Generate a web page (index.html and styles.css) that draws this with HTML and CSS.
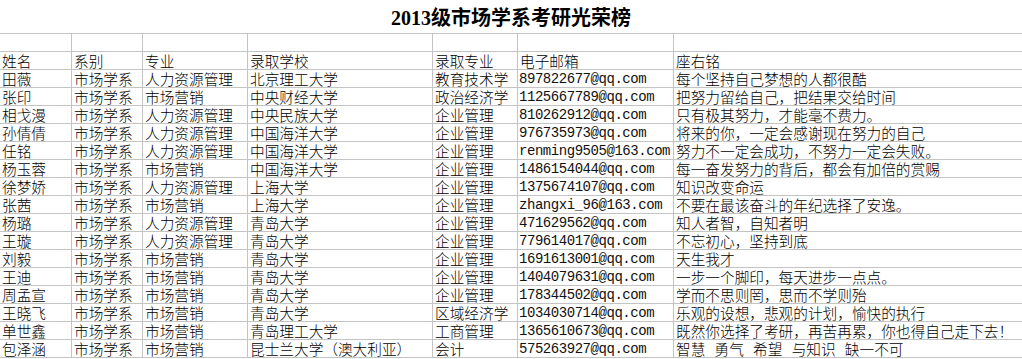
FILE: index.html
```html
<!DOCTYPE html>
<html lang="zh-CN">
<head>
  <meta charset="UTF-8">
  <title>2013级市场学系考研光荣榜</title>
  <link rel="stylesheet" href="styles.css">
</head>
<body>

  <h1 class="title">2013级市场学系考研光荣榜</h1>

  <div class="sheet">
    <!-- empty spacer row -->
    <div class="row"><div></div><div></div><div></div><div></div><div></div><div></div><div></div></div>

    <!-- header -->
    <div class="row"><div>姓名</div><div>系别</div><div>专业</div><div>录取学校</div><div>录取专业</div><div>电子邮箱</div><div>座右铭</div></div>

    <div class="row"><div>田薇</div><div>市场学系</div><div>人力资源管理</div><div>北京理工大学</div><div>教育技术学</div><div class="mail">897822677@qq.com</div><div>每个坚持自己梦想的人都很酷</div></div>
    <div class="row"><div>张印</div><div>市场学系</div><div>市场营销</div><div>中央财经大学</div><div>政治经济学</div><div class="mail">1125667789@qq.com</div><div>把努力留给自己，把结果交给时间</div></div>
    <div class="row"><div>相戈漫</div><div>市场学系</div><div>人力资源管理</div><div>中央民族大学</div><div>企业管理</div><div class="mail">810262912@qq.com</div><div>只有极其努力，才能毫不费力。</div></div>
    <div class="row"><div>孙倩倩</div><div>市场学系</div><div>人力资源管理</div><div>中国海洋大学</div><div>企业管理</div><div class="mail">976735973@qq.com</div><div>将来的你，一定会感谢现在努力的自己</div></div>
    <div class="row"><div>任铭</div><div>市场学系</div><div>人力资源管理</div><div>中国海洋大学</div><div>企业管理</div><div class="mail">renming9505@163.com</div><div>努力不一定会成功，不努力一定会失败。</div></div>
    <div class="row"><div>杨玉蓉</div><div>市场学系</div><div>市场营销</div><div>中国海洋大学</div><div>企业管理</div><div class="mail">1486154044@qq.com</div><div>每一奋发努力的背后，都会有加倍的赏赐</div></div>
    <div class="row"><div>徐梦娇</div><div>市场学系</div><div>人力资源管理</div><div>上海大学</div><div>企业管理</div><div class="mail">1375674107@qq.com</div><div>知识改变命运</div></div>
    <div class="row"><div>张茜</div><div>市场学系</div><div>市场营销</div><div>上海大学</div><div>企业管理</div><div class="mail">zhangxi_96@163.com</div><div>不要在最该奋斗的年纪选择了安逸。</div></div>
    <div class="row"><div>杨璐</div><div>市场学系</div><div>人力资源管理</div><div>青岛大学</div><div>企业管理</div><div class="mail">471629562@qq.com</div><div>知人者智，自知者明</div></div>
    <div class="row"><div>王璇</div><div>市场学系</div><div>人力资源管理</div><div>青岛大学</div><div>企业管理</div><div class="mail">779614017@qq.com</div><div>不忘初心，坚持到底</div></div>
    <div class="row"><div>刘毅</div><div>市场学系</div><div>市场营销</div><div>青岛大学</div><div>企业管理</div><div class="mail">1691613001@qq.com</div><div>天生我才</div></div>
    <div class="row"><div>王迪</div><div>市场学系</div><div>市场营销</div><div>青岛大学</div><div>企业管理</div><div class="mail">1404079631@qq.com</div><div>一步一个脚印，每天进步一点点。</div></div>
    <div class="row"><div>周孟宣</div><div>市场学系</div><div>市场营销</div><div>青岛大学</div><div>企业管理</div><div class="mail">178344502@qq.com</div><div>学而不思则罔，思而不学则殆</div></div>
    <div class="row"><div>王晓飞</div><div>市场学系</div><div>市场营销</div><div>青岛大学</div><div>区域经济学</div><div class="mail">1034030714@qq.com</div><div>乐观的设想，悲观的计划，愉快的执行</div></div>
    <div class="row"><div>单世鑫</div><div>市场学系</div><div>市场营销</div><div>青岛理工大学</div><div>工商管理</div><div class="mail">1365610673@qq.com</div><div>既然你选择了考研，再苦再累，你也得自己走下去！</div></div>
    <div class="row"><div>包泽涵</div><div>市场学系</div><div>市场营销</div><div>昆士兰大学（澳大利亚）</div><div>会计</div><div class="mail">575263927@qq.com</div><div class="spaced">智慧 勇气 希望 与知识 缺一不可</div></div>
  </div>

</body>
</html>
```

FILE: styles.css
```css
body { margin: 0; font-family: "Noto Sans CJK SC", sans-serif; color: #000; background: #fff; overflow: hidden; }
.title { margin: 0; height: 33px; line-height: 36px; text-align: center; font-family: "Liberation Serif", "Noto Sans CJK SC", serif; font-size: 20px; font-weight: bold; }
.sheet { border-top: 1px solid #c4c4c4; }
.row { display: grid; grid-template-columns: 72px 71px 105px 185px 85px 156px 1fr; height: 18px; border-bottom: 1px solid #c4c4c4; box-sizing: border-box; }
.row > div { border-right: 1px solid #c4c4c4; padding: 0 0 0 2px; font-size: 14.67px; line-height: 17px; white-space: nowrap; font-weight: 300; }
.row > div:last-child { border-right: none; }
.row > .mail { font-family: "Liberation Mono", monospace; font-size: 14px; line-height: 19px; letter-spacing: -0.45px; padding-left: 1px; font-weight: normal; color: #111; }
.spaced { word-spacing: 6px; }
```
